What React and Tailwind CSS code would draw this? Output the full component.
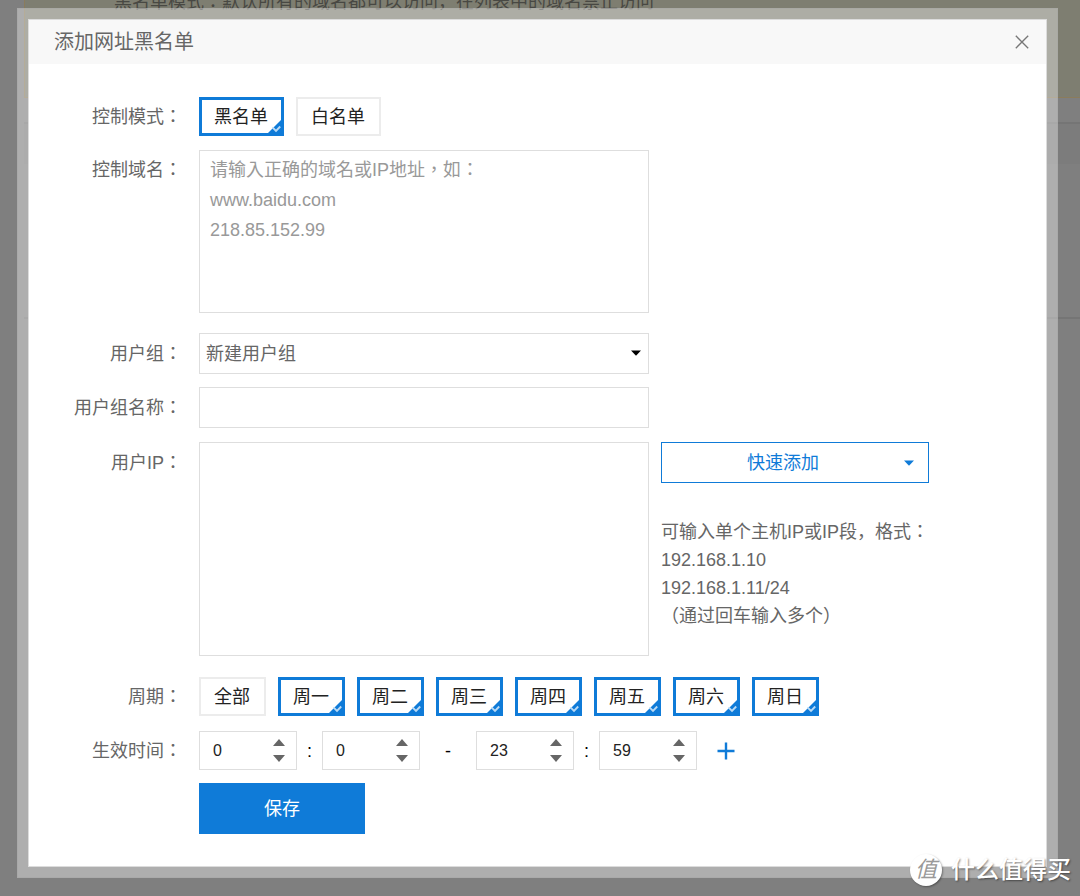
import { useState } from "react";

const WEEKDAYS = ["全部", "周一", "周二", "周三", "周四", "周五", "周六", "周日"];

/* Full-width punctuation centred in its cell */
function Mark({ children }) {
  return (
    <span lang="zh-TW" className="font-['Noto_Sans_CJK_TC',sans-serif] leading-none">
      {children}
    </span>
  );
}

function Row({ label, htmlFor, labelClass = "h-[39px] leading-[41px]", className = "", children }) {
  return (
    <div className={`flex items-start gap-[17px] ${className}`}>
      <label htmlFor={htmlFor} className={`w-[153px] shrink-0 text-right ${labelClass}`}>
        {label}
        <Mark>：</Mark>
      </label>
      {children}
    </div>
  );
}

function Toggle({ type, name, text, checked, onChange }) {
  return (
    <label
      className={`relative flex h-[39px] cursor-pointer items-center bg-white leading-6 text-[#222] ${
        checked ? "border-[3px] border-[#0f7bd8] pr-[13px] pl-3" : "border-2 border-[#ececec] pr-[14px] pl-[13px]"
      }`}
    >
      <input type={type} name={name} checked={checked} onChange={onChange} className="sr-only" />
      {text}
      {checked && (
        <svg className="absolute -right-px -bottom-px" width="15" height="15" viewBox="0 0 15 15" aria-hidden="true">
          <path d="M15 0V15H0Z" fill="#0f7bd8" />
          <path d="M5.5 8.3L9 11.8L13.2 7.5" fill="none" stroke="#b9daf6" strokeWidth="1.9" />
        </svg>
      )}
    </label>
  );
}

function Caret({ className }) {
  return (
    <svg className={className} width="10" height="6" viewBox="0 0 10 6" aria-hidden="true">
      <path d="M0 0.5H10L5 5.8Z" fill="currentColor" />
    </svg>
  );
}

function Spinner({ label, initial, max }) {
  const [value, setValue] = useState(initial);
  const step = (n) => setValue((v) => Math.min(max, Math.max(0, Number(v) + n)));
  return (
    <div className="flex h-[39px] w-[98px] border border-[#dedede] bg-white">
      <input
        type="number"
        aria-label={label}
        min="0"
        max={max}
        value={value}
        onChange={(e) => setValue(e.target.value)}
        className="w-0 min-w-0 flex-1 appearance-none bg-transparent pl-[13px] text-base text-[#222] outline-none [appearance:textfield] [&::-webkit-inner-spin-button]:appearance-none"
      />
      <div className="flex w-[34px] flex-col items-center justify-center gap-[9px] text-[#666]">
        <button type="button" aria-label={`${label}增加`} onClick={() => step(1)}>
          <svg className="block" width="12" height="7" viewBox="0 0 12 7">
            <path d="M6 0L12 7H0Z" fill="currentColor" />
          </svg>
        </button>
        <button type="button" aria-label={`${label}减少`} onClick={() => step(-1)}>
          <svg className="block" width="12" height="7" viewBox="0 0 12 7">
            <path d="M0 0H12L6 7Z" fill="currentColor" />
          </svg>
        </button>
      </div>
    </div>
  );
}

function PageBehind() {
  return (
    <div className="absolute inset-0 flex flex-col bg-[#7f7f7f]" aria-hidden="true">
      <div className="ml-6 h-[98px] overflow-hidden border-b border-l border-[#8b7c5c] bg-[#7e7e71] pl-[89px] text-[#484843]">
        <p className="-mt-[10px] leading-6 whitespace-nowrap">
          黑名单模式
          <Mark>：</Mark>
          默认所有的域名都可以访问，在列表中的域名禁止访问
        </p>
      </div>
      <div className="ml-6 h-[26px] border-b-2 border-[#757575]" />
      <div className="ml-6 h-10 bg-[#7c7c7c]" />
      <div className="ml-6 h-[155px] border-b-2 border-[#757575]" />
    </div>
  );
}

export default function App() {
  const [mode, setMode] = useState("黑名单");
  const [days, setDays] = useState(WEEKDAYS.slice(1));
  const toggleDay = (day) =>
    setDays((list) => (list.includes(day) ? list.filter((d) => d !== day) : [...list, day]));

  return (
    <div
      lang="zh-CN"
      className="relative min-h-screen overflow-hidden pt-2 pr-[22px] pb-[18px] pl-[17px] font-['Liberation_Sans','Noto_Sans_CJK_SC',sans-serif] text-lg text-[#666]"
    >
      <PageBehind />
      <div className="relative border border-[#a3a3a3]/40 bg-white/37 p-[10px]">
        <section role="dialog" aria-labelledby="dialog-title" className="border border-[#dcdcdc] bg-white">
          <header className="flex h-11 items-center justify-between bg-[#f8f8f8] pr-[17px] pl-[25px]">
            <h1 id="dialog-title" className="text-xl leading-8">
              添加网址黑名单
            </h1>
            <button type="button" aria-label="关闭" className="text-[#777]">
              <svg className="block" width="14" height="14" viewBox="0 0 14 14">
                <path d="M0.8 0.8L13.2 13.2M13.2 0.8L0.8 13.2" stroke="currentColor" strokeWidth="1.3" />
              </svg>
            </button>
          </header>

          <form className="pt-[33px] pb-8" onSubmit={(e) => e.preventDefault()}>
            <Row label="控制模式">
              <div className="flex gap-3">
                {["黑名单", "白名单"].map((m) => (
                  <Toggle key={m} type="radio" name="mode" text={m} checked={mode === m} onChange={() => setMode(m)} />
                ))}
              </div>
            </Row>

            <Row label="控制域名" htmlFor="domains" className="mt-[14px]">
              <textarea
                id="domains"
                lang="zh-TW"
                placeholder={"请输入正确的域名或IP地址，如：\nwww.baidu.com\n218.85.152.99"}
                className="block h-[163px] w-[450px] resize-none border border-[#dedede] bg-white px-[10px] py-1 font-['Liberation_Sans','Noto_Sans_CJK_TC',sans-serif] leading-[30px] outline-none placeholder:text-[#999]"
              />
            </Row>

            <Row label="用户组" htmlFor="group" labelClass="h-[41px] leading-[43px]" className="mt-5">
              <div className="relative w-[450px]">
                <select
                  id="group"
                  className="block h-[41px] w-full appearance-none border border-[#dedede] bg-white px-[6px] outline-none"
                >
                  <option>新建用户组</option>
                </select>
                <Caret className="pointer-events-none absolute top-[17px] right-2 text-black" />
              </div>
            </Row>

            <Row label="用户组名称" htmlFor="group-name" labelClass="h-[41px] leading-[43px]" className="mt-[13px]">
              <input
                id="group-name"
                type="text"
                className="block h-[41px] w-[450px] border border-[#dedede] bg-white px-[10px] outline-none"
              />
            </Row>

            <Row label="用户IP" htmlFor="ips" labelClass="h-[41px] leading-[43px]" className="mt-[14px]">
              <div className="flex gap-3">
                <textarea
                  id="ips"
                  className="block h-[214px] w-[450px] resize-none border border-[#dedede] bg-white px-[10px] py-1 leading-[30px] outline-none"
                />
                <div className="flex flex-col gap-[35px]">
                  <button
                    type="button"
                    className="flex h-[41px] w-[268px] items-center border border-[#0f7bd8] bg-white pr-[14px] text-[#0f7bd8]"
                  >
                    <span className="flex-1">快速添加</span>
                    <Caret />
                  </button>
                  <p className="leading-7 whitespace-nowrap">
                    可输入单个主机IP或IP段，格式
                    <Mark>：</Mark>
                    <br />
                    192.168.1.10
                    <br />
                    192.168.1.11/24
                    <br />
                    <Mark>（</Mark>通过回车输入多个<Mark>）</Mark>
                  </p>
                </div>
              </div>
            </Row>

            <Row label="周期" className="mt-[21px]">
              <div className="flex gap-3">
                {WEEKDAYS.map((day) => (
                  <Toggle
                    key={day}
                    type="checkbox"
                    name="days"
                    text={day}
                    checked={days.includes(day)}
                    onChange={() => toggleDay(day)}
                  />
                ))}
              </div>
            </Row>

            <Row label="生效时间" className="mt-[15px]">
              <div className="flex items-center text-black">
                <Spinner label="开始小时" initial={0} max={23} />
                <span className="w-[25px] text-center">:</span>
                <Spinner label="开始分钟" initial={0} max={59} />
                <span className="w-14 text-center">-</span>
                <Spinner label="结束小时" initial={23} max={23} />
                <span className="w-[25px] text-center">:</span>
                <Spinner label="结束分钟" initial={59} max={59} />
                <button type="button" aria-label="添加时间段" className="ml-5 text-[#0f7bd8]">
                  <svg className="block" width="18" height="18" viewBox="0 0 18 18">
                    <path d="M9 0.5V17.5M0.5 9H17.5" stroke="currentColor" strokeWidth="2.4" />
                  </svg>
                </button>
              </div>
            </Row>

            <div className="mt-[13px] pl-[170px]">
              <button type="submit" className="block h-[51px] w-[166px] bg-[#0f7bd8] text-white">
                保存
              </button>
            </div>
          </form>
        </section>
      </div>

      <div className="absolute right-[9px] bottom-[10px] flex items-center gap-[9px] text-white">
        <span className="flex size-8 items-center justify-center rounded-full bg-white text-[22px] leading-none text-[#999] italic shadow-[1px_1px_2px_rgba(0,0,0,0.35)]">
          值
        </span>
        <span className="text-2xl leading-8 font-medium text-shadow-[1px_1px_2px_rgba(0,0,0,0.45)]">什么值得买</span>
      </div>
    </div>
  );
}
